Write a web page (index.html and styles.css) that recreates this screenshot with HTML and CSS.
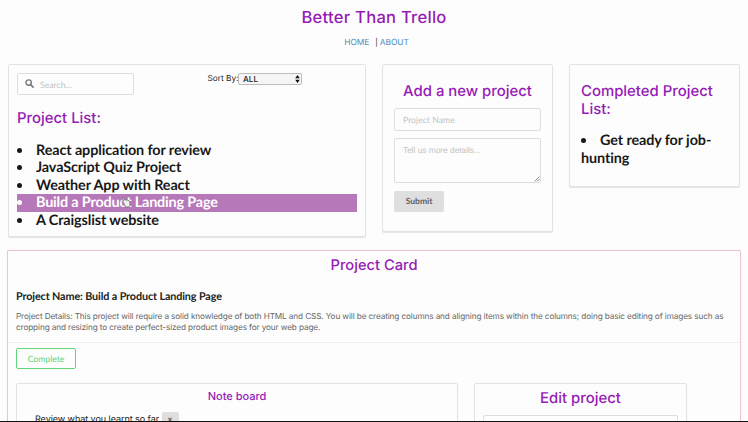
FILE: index.html
```html
<!DOCTYPE html>
<html lang="en">
<head>
<meta charset="utf-8">
<title>Better Than Trello</title>
<link rel="stylesheet" href="styles.css">
</head>
<body>
<header class="header">
  <h1 class="heading title">Better Than Trello</h1>
  <nav class="nav"><a href="#">HOME</a><span>|</span><a href="#">ABOUT</a></nav>
</header>
<main>
  <div class="columns">
    <section class="card list-card">
      <div class="tools">
        <div class="search">
          <svg width="9" height="9" viewBox="0 0 9 9"><circle cx="3.6" cy="3.6" r="2.7" fill="none" stroke="#777" stroke-width="1.4"/><path d="M5.6 5.6L8.1 8.1" stroke="#777" stroke-width="1.6" stroke-linecap="round"/></svg>
          <span>Search...</span>
        </div>
        <div class="sort"><span class="sort-label">Sort By:</span><div class="select"><span>ALL</span><svg width="5" height="8" viewBox="0 0 5 8"><path d="M2.5 0L4.8 3.2H.2zM2.5 8L4.8 4.8H.2z" fill="#111"/></svg></div></div>
      </div>
      <h2 class="heading list-title">Project List:</h2>
      <ul class="projects">
        <li><span>React application for review</span></li>
        <li><span>JavaScript Quiz Project</span></li>
        <li><span>Weather App with React</span></li>
        <li class="selected"><span>Build a Product Landing Page</span>
          <svg class="pointer" width="10" height="11" viewBox="0 0 10 11"><path d="M2.5 6L1 4.4Q1.2 3.3 2.5 4.2L1.8 1Q2.5 0 3.2 1L4 3.2Q5 2.4 5.4 3.2Q6.5 2.7 7 3.5Q8.3 3.2 8.6 4.5L9 7Q9 9 7.8 10H4.5Z" fill="#eee" stroke="#666" stroke-width=".8"/></svg></li>
        <li><span>A Craigslist website</span></li>
      </ul>
    </section>
    <section class="card add-card">
      <h2 class="heading add-title">Add a new project</h2>
      <div class="field">Project Name</div>
      <div class="field area">Tell us more details...<svg class="grip" width="6" height="6" viewBox="0 0 6 6"><path d="M.5 5.5l5-5M3 5.5L5.5 3" stroke="#777" stroke-width=".8"/></svg></div>
      <button class="submit">Submit</button>
    </section>
    <section class="card done-card">
      <h2 class="heading done-title">Completed Project<br>List:</h2>
      <ul class="projects done">
        <li><span>Get ready for job-</span><br>hunting</li>
      </ul>
    </section>
  </div>
  <section class="card detail">
    <h2 class="heading detail-title">Project Card</h2>
    <h3 class="name">Project Name: Build a Product Landing Page</h3>
    <p class="text">Project Details: This project will require a solid knowledge of both HTML and CSS. You will be creating columns and aligning items within the columns; doing basic editing of images such as<br>cropping and resizing to create perfect-sized product images for your web page.</p>
    <div class="actions">
      <button class="complete">Complete</button>
      <div class="boards">
        <section class="card notes">
          <h3 class="heading notes-title">Note board</h3>
          <div class="note"><span>Review what you learnt so far</span><button class="remove">x</button></div>
        </section>
        <section class="card edit">
          <h2 class="heading edit-title">Edit project</h2>
          <div class="field"></div>
        </section>
      </div>
    </div>
  </section>
</main>
<div class="edge"></div>
</body>
</html>
```
FILE: styles.css
```css
* { box-sizing: border-box; }
html, body { height: 100%; overflow: hidden; }
body { margin: 0; background: #fdfdfd; color: #222; font-family: Lato, sans-serif; font-size: 9px; text-rendering: geometricPrecision; }
main { height: 358px; overflow: hidden; }
h1, h2, h3, p, ul { margin: 0; padding: 0; white-space: nowrap; }
svg { display: block; }
button { font-family: inherit; padding: 0; text-rendering: inherit; }
.heading { color: #951bb5; font-family: Inter, sans-serif; font-weight: 500; font-size: 14.9px; line-height: 17.5px; }
.header { height: 64px; text-align: center; padding-top: 9px; }
.title { font-size: 16.6px; line-height: 19px; letter-spacing: .25px; }
.nav { display: flex; justify-content: center; margin: 8px 0 0 5px; font: 8.4px/14px Inter, sans-serif; }
.nav a { color: #4d8dc0; text-decoration: none; letter-spacing: -.05px; }
.nav span { margin: 0 2px 0 6px; font-size: 7.5px; }
.columns { display: flex; align-items: flex-start; gap: 16px; height: 186px; padding-left: 8px; }
.card { border: 1px solid #e3e3e3; border-radius: 2px; box-shadow: 0 1px 1px #e4e4e4; background: #fdfdfd; }
.list-card { width: 358px; height: 173px; padding: 8px 8px 0; }
.tools { display: flex; }
.search { width: 117px; height: 22px; border: 1px solid #dedede; border-radius: 2px; display: flex; align-items: center; gap: 6px; padding-left: 7px; color: #c3c3c3; font-size: 8.7px; }
.search svg { margin-top: -2px; }
.sort { display: flex; align-items: center; height: 11px; margin-left: 73.5px; }
.sort-label { width: 30.5px; white-space: nowrap; font: 8.3px Inter, sans-serif; }
.select { width: 64px; height: 12px; border: 1px solid #bcbcbc; border-radius: 2px; background: #f5f5f5; display: flex; align-items: center; justify-content: space-between; padding: 0 1px 0 4px; font: 500 8.2px Inter, sans-serif; }
.list-title { margin-top: 15px; }
.projects { list-style: none; font-size: 14.4px; line-height: 17.5px; font-weight: 700; color: #181818; letter-spacing: -.11px; }
.list-card .projects { margin-top: 14px; }
.projects li { position: relative; }
.projects li::before { content: ""; display: inline-block; width: 5px; height: 5px; border-radius: 50%; background: currentColor; margin-right: 14px; vertical-align: 2px; }
.selected { background: #b778b9; color: #fff; letter-spacing: -.17px; }
.pointer { position: absolute; left: 104px; top: 3px; }
.add-card { width: 171px; height: 168px; padding: 18px 11px 0; }
.add-title { text-align: center; }
.field { height: 23px; border: 1px solid #dedede; border-radius: 2px; padding: 0 8px; line-height: 21px; font-size: 8.7px; color: #c3c3c3; }
.add-card .field { margin-top: 7.5px; }
.add-card .area { position: relative; height: 45px; margin-top: 7px; font: 8.3px/23px "Liberation Sans", sans-serif; }
.grip { position: absolute; right: 0; bottom: 0; }
.submit { display: block; width: 50px; height: 21px; margin-top: 7.5px; border: 0; border-radius: 2px; background: #dfdfdf; color: #606060; font-size: 8.5px; font-weight: 700; }
.done-card { width: 171px; height: 123px; padding: 18px 11px 0; }
.done { margin-top: 14px; }
.detail { width: 734px; height: 220px; margin-left: 7px; border-color: #edc5d1; box-shadow: 0 0 1px #edc5d1; }
.detail-title { text-align: center; margin-top: 6px; font-size: 14.7px; }
.name { margin: 14.5px 0 0 8px; font-size: 10.8px; line-height: 15px; color: #222; letter-spacing: -.12px; }
.text { padding: 7px 0 0 8px; height: 38px; font: 8.2px/11px Inter, sans-serif; letter-spacing: -.107px; color: #666; }
.actions { border-top: 1px solid #efefef; padding: 5px 8px; }
.complete { display: block; width: 60px; height: 21px; border: 1px solid #61d479; border-radius: 2px; background: transparent; color: #61d479; font-size: 8.6px; }
.boards { display: flex; gap: 16px; margin-top: 14px; }
.notes { width: 442px; height: 100px; padding: 5px 18px; }
.notes-title { text-align: center; font-size: 11px; line-height: 15px; }
.note { display: flex; align-items: flex-start; gap: 2.5px; margin-top: 8px; font: 9px/15px Inter, sans-serif; letter-spacing: -.05px; white-space: nowrap; }
.remove { width: 17px; height: 18px; border: 0; border-radius: 2px; background: #dedede; font: 700 8.5px/14px Lato, sans-serif; color: #555; display: flex; align-items: flex-start; justify-content: center; }
.edit { width: 213px; height: 100px; padding: 6px 8px; }
.edit-title { text-align: center; }
.edit .field { margin-top: 7px; }
.edge { position: fixed; left: 0; right: 0; bottom: 0; height: 1px; background: #111; }
```
